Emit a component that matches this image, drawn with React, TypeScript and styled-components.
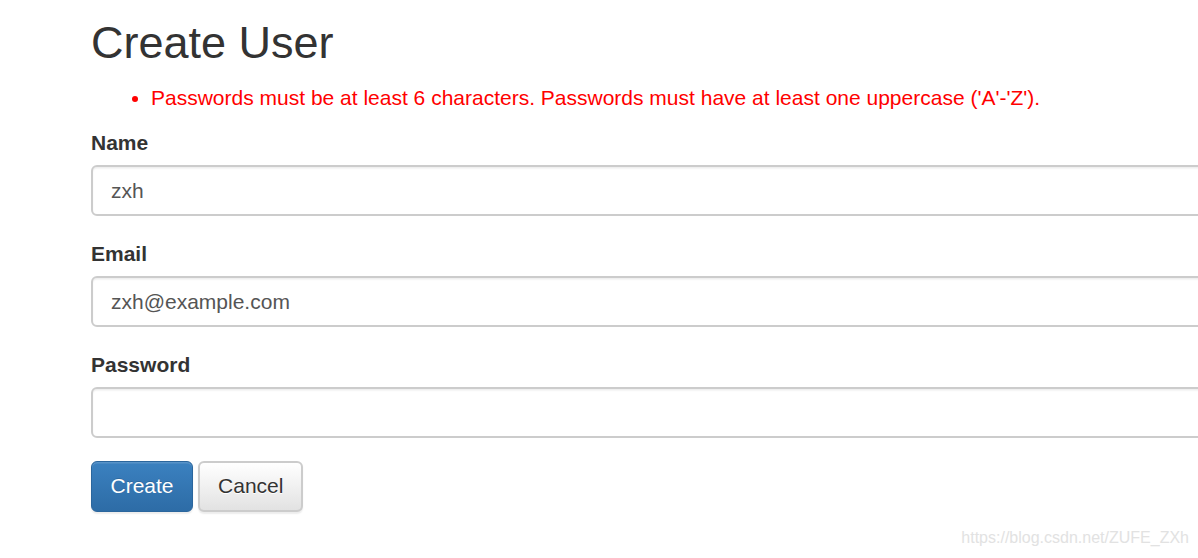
import React from 'react';
import styled, { createGlobalStyle } from 'styled-components';

const GlobalStyle = createGlobalStyle`
  html, body {
    margin: 0;
    padding: 0;
    background: #fff;
    overflow: hidden;
  }
  body {
    font-family: "Liberation Sans", Arial, sans-serif;
    font-size: 21px;
    line-height: 1.42857;
    color: #333;
  }
`;

const Page = styled.div`
  position: relative;
  width: 1198px;
  height: 558px;
  overflow: hidden;
  padding-left: 91px;
  box-sizing: border-box;
`;

const Content = styled.div`
  width: 1160px;
`;

const Title = styled.h2`
  margin: 18px 0 15px;
  font-size: 45px;
  font-weight: 500;
  line-height: 1.1;
  color: #333;
`;

const ErrorList = styled.ul`
  margin: 0 0 15px;
  padding-left: 60px;
  color: #f00;
  line-height: 30px;
`;

const FormGroup = styled.div`
  margin-bottom: 22.5px;
`;

const Label = styled.label`
  display: block;
  margin-bottom: 7.5px;
  font-weight: 700;
  line-height: 30px;
  color: #333;
`;

const Input = styled.input`
  display: block;
  width: 100%;
  height: 51px;
  box-sizing: border-box;
  padding: 9px 18px;
  font-family: inherit;
  font-size: 21px;
  color: #555;
  background: #fff;
  border: 2px solid #ccc;
  border-radius: 6px;
  box-shadow: inset 0 1.5px 1.5px rgba(0, 0, 0, 0.075);
  outline: none;
`;

const Actions = styled.div`
  display: flex;
  gap: 5px;
`;

const Button = styled.button<{ $primary?: boolean }>`
  height: 51px;
  box-sizing: border-box;
  padding: 0 ${(p) => (p.$primary ? '18.5px' : '18px')};
  font-family: inherit;
  font-size: 21px;
  border-radius: 6px;
  cursor: pointer;
  color: ${(p) => (p.$primary ? '#fff' : '#333')};
  border: ${(p) => (p.$primary ? '1.5px solid #2b669d' : '2px solid #ccc')};
  background-image: ${(p) =>
    p.$primary
      ? 'linear-gradient(to bottom, #3b81c0 0%, #2d6ca6 100%)'
      : 'linear-gradient(to bottom, #fff 0%, #e2e2e2 100%)'};
  box-shadow: inset 0 1.5px 0 rgba(255, 255, 255, 0.15), 0 1.5px 1.5px rgba(0, 0, 0, 0.075);
  text-shadow: ${(p) => (p.$primary ? '0 -1px 0 rgba(0,0,0,.15)' : '0 1px 0 #fff')};
`;

const Watermark = styled.div`
  position: absolute;
  right: 9px;
  bottom: 8px;
  font-size: 16px;
  color: #e2e2e2;
`;

const fields = [
  { label: 'Name', value: 'zxh', type: 'text' },
  { label: 'Email', value: 'zxh@example.com', type: 'text' },
  { label: 'Password', value: '', type: 'password' },
];

const App = () => (
  <>
    <GlobalStyle />
    <Page>
      <Content>
        <Title>Create User</Title>
        <ErrorList>
          <li>
            Passwords must be at least 6 characters. Passwords must have at least one uppercase ('A'-'Z').
          </li>
        </ErrorList>
        {fields.map((f) => (
          <FormGroup key={f.label}>
            <Label>{f.label}</Label>
            <Input type={f.type} defaultValue={f.value} />
          </FormGroup>
        ))}
        <Actions>
          <Button $primary>Create</Button>
          <Button>Cancel</Button>
        </Actions>
      </Content>
      <Watermark>https://blog.csdn.net/ZUFE_ZXh</Watermark>
    </Page>
  </>
);

export default App;
